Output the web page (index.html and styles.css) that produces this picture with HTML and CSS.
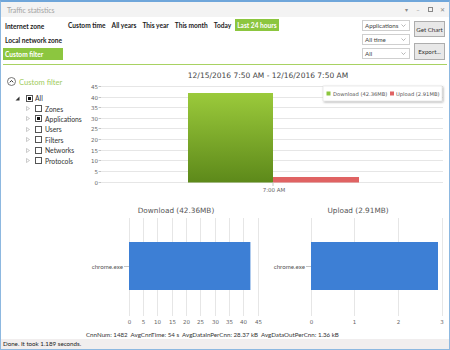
FILE: index.html
```html
<!DOCTYPE html>
<html>
<head>
<meta charset="utf-8">
<title>Traffic statistics</title>
<link rel="stylesheet" href="styles.css">
</head>
<body>
<div class="window">
  <div class="titlebar">
    <span class="title">Traffic statistics</span>
    <div class="wincontrols">
      <span class="wc">▾</span>
      <span class="wc">–</span>
      <span class="wc"><span class="wc-box"></span></span>
      <span class="wc">✕</span>
    </div>
  </div>

  <div class="toolbar">
    <div class="zones">
      <div class="zone">Internet zone</div>
      <div class="zone">Local network zone</div>
      <div class="zone active">Custom filter</div>
    </div>
    <div class="times">
      <span class="time">Custom time</span>
      <span class="time">All years</span>
      <span class="time">This year</span>
      <span class="time">This month</span>
      <span class="time">Today</span>
      <span class="time active">Last 24 hours</span>
    </div>
    <div class="selects">
      <div class="select"><span>Applications</span><svg class="chev" width="5" height="3" viewBox="0 0 5 3"><polyline points="0.5,0.5 2.5,2.5 4.5,0.5" fill="none" stroke="#999" stroke-width="0.7"/></svg></div>
      <div class="select"><span>All time</span><svg class="chev" width="5" height="3" viewBox="0 0 5 3"><polyline points="0.5,0.5 2.5,2.5 4.5,0.5" fill="none" stroke="#999" stroke-width="0.7"/></svg></div>
      <div class="select"><span>All</span><svg class="chev" width="5" height="3" viewBox="0 0 5 3"><polyline points="0.5,0.5 2.5,2.5 4.5,0.5" fill="none" stroke="#999" stroke-width="0.7"/></svg></div>
    </div>
    <div class="buttons">
      <div class="btn btn-get">Get Chart</div>
      <div class="btn btn-export">Export...</div>
    </div>
  </div>

  <div class="rule"></div>

  <div class="main">
    <div class="sidebar">
      <div class="filter-head">
        <span class="circle-icon"><svg width="9" height="9" viewBox="0 0 9 9"><circle cx="4.5" cy="4.5" r="4" fill="none" stroke="#555" stroke-width="0.8"/><polyline points="2.8,5.3 4.5,3.5 6.2,5.3" fill="none" stroke="#333" stroke-width="1"/></svg></span>
        <span class="filter-label">Custom filter</span>
      </div>
      <div class="tree">
        <div class="node root">
          <span class="exp"><svg width="5" height="5" viewBox="0 0 5 5"><polygon points="4.5,0.5 4.5,4.5 0.5,4.5" fill="#333"/></svg></span>
          <span class="cb checked"></span>
          <span class="lbl">All</span>
        </div>
        <div class="node child">
          <span class="exp"><svg width="4" height="5" viewBox="0 0 4 5"><polygon points="0.5,0.5 3.5,2.5 0.5,4.5" fill="none" stroke="#aaa" stroke-width="0.6"/></svg></span>
          <span class="cb"></span><span class="lbl">Zones</span>
        </div>
        <div class="node child">
          <span class="exp"><svg width="4" height="5" viewBox="0 0 4 5"><polygon points="0.5,0.5 3.5,2.5 0.5,4.5" fill="none" stroke="#aaa" stroke-width="0.6"/></svg></span>
          <span class="cb checked"></span><span class="lbl">Applications</span>
        </div>
        <div class="node child">
          <span class="exp"><svg width="4" height="5" viewBox="0 0 4 5"><polygon points="0.5,0.5 3.5,2.5 0.5,4.5" fill="none" stroke="#aaa" stroke-width="0.6"/></svg></span>
          <span class="cb"></span><span class="lbl">Users</span>
        </div>
        <div class="node child">
          <span class="exp"><svg width="4" height="5" viewBox="0 0 4 5"><polygon points="0.5,0.5 3.5,2.5 0.5,4.5" fill="none" stroke="#aaa" stroke-width="0.6"/></svg></span>
          <span class="cb"></span><span class="lbl">Filters</span>
        </div>
        <div class="node child">
          <span class="exp"><svg width="4" height="5" viewBox="0 0 4 5"><polygon points="0.5,0.5 3.5,2.5 0.5,4.5" fill="none" stroke="#aaa" stroke-width="0.6"/></svg></span>
          <span class="cb"></span><span class="lbl">Networks</span>
        </div>
        <div class="node child">
          <span class="exp"><svg width="4" height="5" viewBox="0 0 4 5"><polygon points="0.5,0.5 3.5,2.5 0.5,4.5" fill="none" stroke="#aaa" stroke-width="0.6"/></svg></span>
          <span class="cb"></span><span class="lbl">Protocols</span>
        </div>
      </div>
    </div>

    <div class="charts">
      <svg class="topchart" width="362" height="135" viewBox="0 0 362 135">
        <defs>
          <linearGradient id="gbar" x1="0" y1="0" x2="0" y2="1">
            <stop offset="0" stop-color="#9bca3b"/>
            <stop offset="1" stop-color="#5d891a"/>
          </linearGradient>
          <filter id="sh" x="-10%" y="-30%" width="130%" height="180%">
            <feDropShadow dx="1" dy="1" stdDeviation="0.8" flood-color="#000" flood-opacity="0.35"/>
          </filter>
        </defs>
        <text class="ctitle" x="182" y="12.5" text-anchor="middle">12/15/2016 7:50 AM - 12/16/2016 7:50 AM</text>
        <g class="grid">
          <line x1="15" y1="21.5" x2="357" y2="21.5"/>
          <line x1="15" y1="32.5" x2="357" y2="32.5"/>
          <line x1="15" y1="42.5" x2="357" y2="42.5"/>
          <line x1="15" y1="53.5" x2="357" y2="53.5"/>
          <line x1="15" y1="63.5" x2="357" y2="63.5"/>
          <line x1="15" y1="74.5" x2="357" y2="74.5"/>
          <line x1="15" y1="85.5" x2="357" y2="85.5"/>
          <line x1="15" y1="95.5" x2="357" y2="95.5"/>
          <line x1="15" y1="106.5" x2="357" y2="106.5"/>
          <line x1="15" y1="117.5" x2="357" y2="117.5"/>
        </g>
        <g class="tick">
          <line x1="12.5" y1="21.5" x2="15" y2="21.5"/>
          <line x1="12.5" y1="32.5" x2="15" y2="32.5"/>
          <line x1="12.5" y1="42.5" x2="15" y2="42.5"/>
          <line x1="12.5" y1="53.5" x2="15" y2="53.5"/>
          <line x1="12.5" y1="63.5" x2="15" y2="63.5"/>
          <line x1="12.5" y1="74.5" x2="15" y2="74.5"/>
          <line x1="12.5" y1="85.5" x2="15" y2="85.5"/>
          <line x1="12.5" y1="95.5" x2="15" y2="95.5"/>
          <line x1="12.5" y1="106.5" x2="15" y2="106.5"/>
          <line x1="12.5" y1="117.5" x2="15" y2="117.5"/>
        </g>
        <g class="axlab" text-anchor="end">
          <text x="12" y="23.5">45</text>
          <text x="12" y="34.5">40</text>
          <text x="12" y="44.5">35</text>
          <text x="12" y="55.5">30</text>
          <text x="12" y="65.5">25</text>
          <text x="12" y="76.5">20</text>
          <text x="12" y="87.5">15</text>
          <text x="12" y="97.5">10</text>
          <text x="12" y="108.5">5</text>
          <text x="12" y="119.5">0</text>
        </g>
        <rect x="102" y="28" width="85" height="89.5" fill="url(#gbar)"/>
        <rect x="187" y="112" width="86" height="5.5" fill="#e06363"/>
        <line class="tickline" x1="187" y1="117.5" x2="187" y2="121"/>
        <text class="axlab" x="188" y="127" text-anchor="middle">7:00 AM</text>
        <rect x="237" y="21" width="119" height="15" fill="#fff" stroke="#d8d8d8" stroke-width="0.5" filter="url(#sh)"/>
        <rect x="240.5" y="26.5" width="4" height="4" fill="#8cc63e"/>
        <text class="leg" x="247" y="30.5">Download (42.36MB)</text>
        <rect x="304" y="26.5" width="4" height="4" fill="#e06363"/>
        <text class="leg" x="310" y="30.5">Upload (2.91MB)</text>
      </svg>

      <svg class="lowcharts" width="362" height="130" viewBox="0 0 362 130">
        <text class="ltitle" x="90" y="13" text-anchor="middle">Download (42.36MB)</text>
        <g class="grid">
          <line x1="43.5" y1="18" x2="43.5" y2="116"/>
          <line x1="57.5" y1="18" x2="57.5" y2="116"/>
          <line x1="71.5" y1="18" x2="71.5" y2="116"/>
          <line x1="86.5" y1="18" x2="86.5" y2="116"/>
          <line x1="100.5" y1="18" x2="100.5" y2="116"/>
          <line x1="114.5" y1="18" x2="114.5" y2="116"/>
          <line x1="129.5" y1="18" x2="129.5" y2="116"/>
          <line x1="143.5" y1="18" x2="143.5" y2="116"/>
          <line x1="157.5" y1="18" x2="157.5" y2="116"/>
          <line x1="172.5" y1="18" x2="172.5" y2="116"/>
        </g>
        <rect x="43" y="42" width="121.4" height="48" fill="#3d7fd5"/>
        <line class="tickline" x1="38" y1="66.5" x2="43" y2="66.5"/>
        <text class="clab" x="37" y="68.5" text-anchor="end">chrome.exe</text>
        <g class="axlab" text-anchor="middle">
          <text x="43.5" y="124">0</text>
          <text x="57.5" y="124">5</text>
          <text x="71.5" y="124">10</text>
          <text x="86.5" y="124">15</text>
          <text x="100.5" y="124">20</text>
          <text x="114.5" y="124">25</text>
          <text x="129.5" y="124">30</text>
          <text x="143.5" y="124">35</text>
          <text x="157.5" y="124">40</text>
          <text x="172.5" y="124">45</text>
        </g>

        <text class="ltitle" x="272" y="13" text-anchor="middle">Upload (2.91MB)</text>
        <g class="grid">
          <line x1="225.5" y1="18" x2="225.5" y2="116"/>
          <line x1="268.5" y1="18" x2="268.5" y2="116"/>
          <line x1="312.5" y1="18" x2="312.5" y2="116"/>
          <line x1="356.5" y1="18" x2="356.5" y2="116"/>
        </g>
        <rect x="225" y="42" width="127" height="48" fill="#3d7fd5"/>
        <line class="tickline" x1="220" y1="66.5" x2="225" y2="66.5"/>
        <text class="clab" x="219" y="68.5" text-anchor="end">chrome.exe</text>
        <g class="axlab" text-anchor="middle">
          <text x="225.5" y="124">0</text>
          <text x="268.5" y="124">1</text>
          <text x="312.5" y="124">2</text>
          <text x="356" y="124">3</text>
        </g>
      </svg>

      <div class="stats">CnnNum: 1482  AvgCnnTime: 54 s  AvgDataInPerCnn: 28.37 kB  AvgDataOutPerCnn: 1.36 kB</div>
    </div>
  </div>

  <div class="statusbar">Done. It took 1.189 seconds.</div>
</div>
</body>
</html>
```

FILE: styles.css
```css
* { box-sizing: border-box; margin: 0; padding: 0; }
html, body { width: 450px; height: 350px; overflow: hidden; background: #fff; }
body { font-family: "Lato", "Open Sans", sans-serif; color: #222; }

.window {
  width: 450px; height: 350px;
  border: 1px solid #8db8e0;
  border-top: 2px solid #6fa6da;
  display: flex; flex-direction: column;
  background: #fff;
}

.titlebar {
  height: 15px; flex: none;
  background: #f3f3f3;
  display: flex; align-items: center; justify-content: space-between;
  padding: 0 1px 0 6px;
}
.title { font-size: 7px; color: #a3a3a3; }
.wincontrols { display: flex; align-items: center; }
.wc {
  width: 12px; height: 12px;
  display: flex; align-items: center; justify-content: center;
  font-size: 6px; color: #888;
}
.wc-box { width: 5px; height: 5px; border: 0.8px solid #888; }

.toolbar {
  height: 47px; flex: none;
  display: flex;
  padding: 0 4px 0 2px;
}
.zones { width: 60px; padding-top: 3px; display: flex; flex-direction: column; gap: 2px; }
.zone {
  height: 12px; line-height: 12px; padding: 0 2px;
  font-size: 6.6px; font-weight: 700; color: #222; white-space: nowrap;
}
.zone.active { background: #8cc63f; color: #fff; }

.times { margin-left: 5px; padding-top: 2px; display: flex; align-items: flex-start; gap: 6px; }
.time {
  height: 12px; line-height: 12px;
  font-size: 6.6px; font-weight: 700; color: #222; white-space: nowrap;
}
.time.active { background: #8cc63f; color: #fff; padding: 0 2px; margin-left: -2px; }

.selects { margin-left: auto; width: 48px; padding-top: 3px; display: flex; flex-direction: column; gap: 3px; }
.select {
  height: 11px; border: 1px solid #cfcfcf; background: #fff;
  display: flex; align-items: center; justify-content: space-between;
  padding: 0 3px 0 2px;
  font-size: 6.2px; color: #444;
}
.chev { display: block; }

.buttons { margin-left: 4px; width: 31px; padding-top: 4px; display: flex; flex-direction: column; gap: 6px; }
.btn {
  border: 1px solid #adadad; background: #e8e8e8;
  display: flex; align-items: center; justify-content: center;
  font-size: 6.2px; color: #333; white-space: nowrap;
}
.btn-get { height: 16px; }
.btn-export { height: 17px; }

.rule { height: 1px; flex: none; margin: 0 2px; background: #a8d262; }

.main { flex: 1; display: flex; min-height: 0; }

.sidebar { width: 85px; flex: none; padding-top: 11px; }
.filter-head { height: 11px; display: flex; align-items: center; padding-left: 6px; }
.circle-icon { width: 9px; height: 9px; display: block; }
.circle-icon svg { display: block; }
.filter-label { margin-left: 3px; font-size: 7.6px; color: #9fcc60; white-space: nowrap; }

.tree { margin-top: 6px; }
.node { height: 10.4px; display: flex; align-items: center; font-size: 6.8px; color: #333; }
.node.root { padding-left: 14px; }
.node.child { padding-left: 25px; }
.exp { display: flex; align-items: center; }
.root .exp { width: 11px; }
.child .exp { width: 9px; }
.exp svg { display: block; }
.cb {
  width: 7px; height: 7px; border: 1px solid #555; background: #fff;
  display: flex; align-items: center; justify-content: center;
}
.cb.checked::after { content: ""; width: 3px; height: 3px; background: #111; }
.root .lbl { margin-left: 2px; }
.child .lbl { margin-left: 3px; }

.charts { flex: 1; display: flex; flex-direction: column; min-width: 0; }
.topchart, .lowcharts { display: block; flex: none; }

.ctitle { font-family: "DejaVu Sans", sans-serif; font-size: 7.5px; fill: #444; }
.ltitle { font-family: "DejaVu Sans", sans-serif; font-size: 7.3px; fill: #555; }
.axlab { font-family: "DejaVu Sans", sans-serif; font-size: 5.5px; fill: #666; }
.leg { font-family: "DejaVu Sans", sans-serif; font-size: 5.2px; fill: #555; }
.clab { font-family: "Lato", sans-serif; font-size: 6.2px; fill: #555; }
.grid line { stroke: #e6e6e6; stroke-width: 1; }
.tick line, .tickline { stroke: #c4c4c4; stroke-width: 1; }

.stats {
  height: 9px; line-height: 9px; flex: none;
  font-size: 6.2px; color: #333; white-space: pre;
}

.statusbar {
  height: 10px; flex: none;
  background: #f1eeee;
  padding-left: 2px; line-height: 10px;
  font-size: 6.2px; color: #222; white-space: nowrap;
}
```
